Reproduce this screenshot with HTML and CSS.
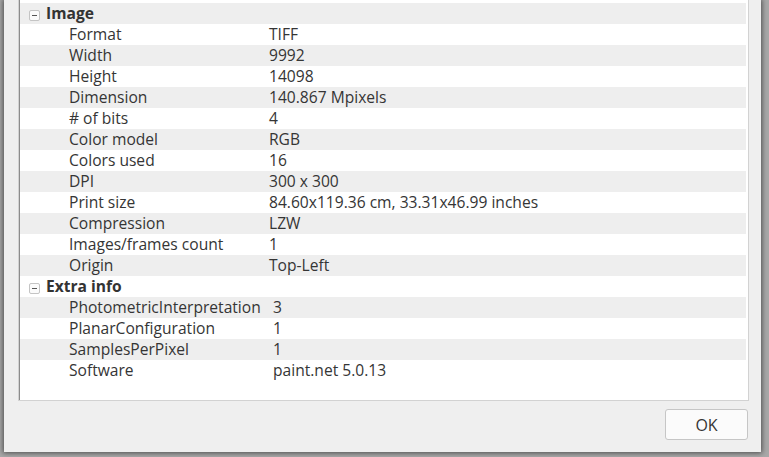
FILE: index.html
```html
<!DOCTYPE html>
<html>
<head>
<meta charset="utf-8">
<link rel="stylesheet" href="styles.css">
</head>
<body>
<div class="dialog">
  <div class="tree">
    <div class="group">
      <div class="row head alt"><span class="exp"></span><span class="gtitle">Image</span></div>
      <div class="row"><span class="name">Format</span><span class="val">TIFF</span></div>
      <div class="row alt"><span class="name">Width</span><span class="val">9992</span></div>
      <div class="row"><span class="name">Height</span><span class="val">14098</span></div>
      <div class="row alt"><span class="name">Dimension</span><span class="val">140.867 Mpixels</span></div>
      <div class="row"><span class="name"># of bits</span><span class="val">4</span></div>
      <div class="row alt"><span class="name">Color model</span><span class="val">RGB</span></div>
      <div class="row"><span class="name">Colors used</span><span class="val">16</span></div>
      <div class="row alt"><span class="name">DPI</span><span class="val">300 x 300</span></div>
      <div class="row"><span class="name">Print size</span><span class="val">84.60x119.36 cm, 33.31x46.99 inches</span></div>
      <div class="row alt"><span class="name">Compression</span><span class="val">LZW</span></div>
      <div class="row"><span class="name">Images/frames count</span><span class="val">1</span></div>
      <div class="row alt"><span class="name">Origin</span><span class="val">Top-Left</span></div>
    </div>
    <div class="group wide">
      <div class="row head"><span class="exp"></span><span class="gtitle">Extra info</span></div>
      <div class="row alt"><span class="name">PhotometricInterpretation</span><span class="val">3</span></div>
      <div class="row"><span class="name">PlanarConfiguration</span><span class="val">1</span></div>
      <div class="row alt"><span class="name">SamplesPerPixel</span><span class="val">1</span></div>
      <div class="row"><span class="name">Software</span><span class="val">paint.net 5.0.13</span></div>
    </div>
  </div>
  <div class="buttons">
    <button class="btn">OK</button>
  </div>
</div>
</body>
</html>
```
FILE: styles.css
```css
html, body {
  margin: 0;
  padding: 0;
}
body {
  width: 769px;
  height: 457px;
  overflow: hidden;
  background: #a8a8a8;
  font-family: "Open Sans", "Noto Sans", sans-serif;
  font-size: 15.6px;
  color: #353535;
}
.dialog {
  margin-left: 4px;
  width: 757px;
  height: 452px;
  background: #efefef;
  box-shadow: 0 0 5px 1px rgba(0, 0, 0, 0.55);
  box-sizing: border-box;
  padding: 0 12px 0 14px;
  display: flex;
  flex-direction: column;
}
.tree {
  height: 401px;
  box-sizing: border-box;
  background: #ffffff;
  border: 1px solid #d2d2d2;
  border-top: 0;
  box-shadow: inset 1px 0 0 #8c8c8c;
  padding: 3px 2px 0 1px;
}
.row {
  height: 21px;
  display: grid;
  grid-template-columns: 200px 1fr;
  align-items: center;
  padding-left: 49px;
  white-space: nowrap;
  line-height: 21px;
}
.wide .row {
  grid-template-columns: 204px 1fr;
}
.row.alt {
  background: #eeeeee;
}
.row.head {
  display: flex;
  padding-left: 9px;
}
.exp {
  width: 9px;
  height: 9px;
  border: 1px solid #c4c4c4;
  border-radius: 2px;
  background: #fbfbfb;
  margin-top: 3px;
  margin-right: 6px;
  position: relative;
}
.exp::after {
  content: "";
  position: absolute;
  left: 2px;
  top: 4px;
  width: 5px;
  height: 1px;
  background: #555555;
}
.gtitle {
  font-weight: bold;
  color: #333333;
}
.buttons {
  display: flex;
  justify-content: flex-end;
  padding-top: 8px;
  padding-right: 1px;
}
.btn {
  width: 83px;
  height: 31px;
  border: 1px solid #c6c6c6;
  border-radius: 3px;
  background: #fbfbfb;
  font-family: "Open Sans", "Noto Sans", sans-serif;
  font-size: 16px;
  color: #353535;
  padding: 0;
}
```
